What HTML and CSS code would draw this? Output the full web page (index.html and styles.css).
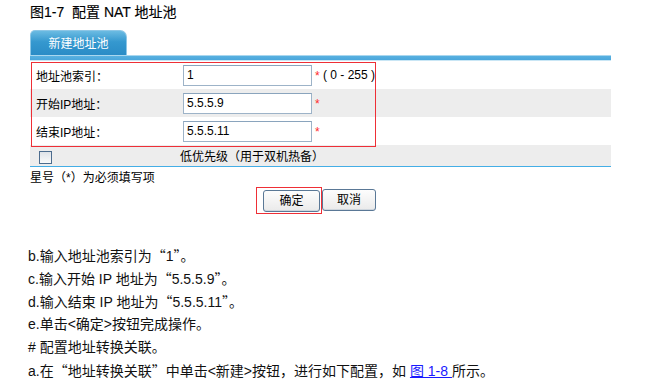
FILE: index.html
```html
<!DOCTYPE html>
<html lang="zh">
<head>
<meta charset="utf-8">
<link rel="stylesheet" href="styles.css">
</head>
<body>
<div class="page">
  <div class="fig-title">图1-7&nbsp; 配置 NAT 地址池</div>
  <div class="panel">
    <div class="tabs"><div class="tab">新建地址池</div></div>
    <div class="strip"></div>
    <div class="rows">
      <div class="hl-box"></div>
      <div class="row"><span class="lbl">地址池索引：</span><span class="inp">1</span><span class="star">*</span><span class="hint">( 0 - 255 )</span></div>
      <div class="row gray"><span class="lbl">开始IP地址：</span><span class="inp">5.5.5.9</span><span class="star">*</span></div>
      <div class="row"><span class="lbl">结束IP地址：</span><span class="inp">5.5.5.11</span><span class="star">*</span></div>
      <div class="row gray chk-row"><span class="chk"></span><span class="chk-lbl">低优先级<span class="cjk">（</span>用于双机热备<span class="cjk">）</span></span></div>
    </div>
    <div class="note">星号<span class="cjk">（</span>*<span class="cjk">）</span>为必须填写项</div>
    <div class="btns">
      <span class="btn-wrap"><span class="btn">确定</span></span>
      <span class="btn">取消</span>
    </div>
  </div>
  <div class="text">
    <p>b.输入地址池索引为<span class="cjk">“</span>1<span class="cjk">”</span>。</p>
    <p>c.输入开始 IP 地址为<span class="cjk">“</span>5.5.5.9<span class="cjk">”</span>。</p>
    <p>d.输入结束 IP 地址为<span class="cjk">“</span>5.5.5.11<span class="cjk">”</span>。</p>
    <p>e.单击&lt;确定&gt;按钮完成操作。</p>
    <p># 配置地址转换关联。</p>
    <p>a.在<span class="cjk">“</span>地址转换关联<span class="cjk">”</span>中单击&lt;新建&gt;按钮，进行如下配置，如 <a class="link">图 1-8 </a>所示。</p>
  </div>
</div>
</body>
</html>
```
FILE: styles.css
```css
html, body { margin: 0; padding: 0; background: #fff; }
body { font-family: "Liberation Sans", "Noto Sans CJK SC", sans-serif; color: #000; }
.cjk { font-family: "Noto Sans CJK SC", sans-serif; }
.page { padding: 4px 0 0 30px; }
.fig-title { font-size: 14px; font-weight: normal; height: 16px; line-height: 16px; color: #000; -webkit-text-stroke: 0.15px #000; }
.panel { width: 581px; margin-top: 10px; font-size: 12px; }
.tabs { height: 25px; display: flex; align-items: flex-end; }
.tab { width: 97px; height: 25px; box-sizing: border-box; border: 1px solid #8cc6e6; border-bottom: none; border-radius: 5px 7px 0 0; background: linear-gradient(#6bbbe2, #3598cf 45%, #2a8cc6); color: #fff; text-align: center; line-height: 26px; font-size: 12px; }
.strip { height: 6px; background: linear-gradient(#a9d7ef 0, #a9d7ef 1px, #58b1e0 1px, #4aa7dc 5px, #c9e6f5 5px); }
.rows { position: relative; border-bottom: 1px solid #44aee6; }
.row { height: 28px; display: flex; align-items: center; }
.row.gray { background: #ededed; }
.lbl { width: 153px; padding-left: 6px; box-sizing: border-box; }
.inp { width: 129px; height: 21px; box-sizing: border-box; border: 1px solid #9db3c8; border-top-color: #8aa4bd; background: #fff; padding-left: 3px; line-height: 19px; font-size: 12px; }
.star { color: #ff2b2b; width: 8px; margin-left: 3px; font-size: 12px; line-height: 1; padding-top: 2px; }
.hint { font-size: 12px; margin-left: 0; }
.chk-row { height: 21px; }
.chk { width: 13px; height: 13px; box-sizing: border-box; border: 1px solid #4c6c8e; background: linear-gradient(#dfe3e8, #fafafa); margin-left: 9px; margin-top: 4px; }
.chk-lbl { margin-left: 128px; font-size: 12px; }
.hl-box { position: absolute; left: 1px; top: 1px; width: 345px; height: 85px; border: 1px solid #ee2f36; box-sizing: border-box; pointer-events: none; }
.note { font-size: 12px; height: 16px; line-height: 16px; margin-top: 2px; }
.btns { display: flex; margin-top: 1px; padding-left: 226px; align-items: center; height: 28px; }
.btn-wrap { border: 1px solid #ee2f36; padding: 2px 1px 1px 6px; display: flex; }
.btn { width: 57px; height: 22px; box-sizing: border-box; border: 1px solid #5a7896; border-radius: 3px; background: linear-gradient(#fdfdfd, #eaeaea); text-align: center; line-height: 20px; font-size: 12px; box-shadow: inset 0 -1px 0 #cfd6dd; }
.btn-wrap + .btn { margin-left: 0; width: 54px; }
.text { margin-top: 30px; margin-left: -2px; font-size: 14px; color: #111; }
.text p { margin: 0; height: 23px; line-height: 23px; }
.link { color: #1a1aff; text-decoration: underline; }
```
